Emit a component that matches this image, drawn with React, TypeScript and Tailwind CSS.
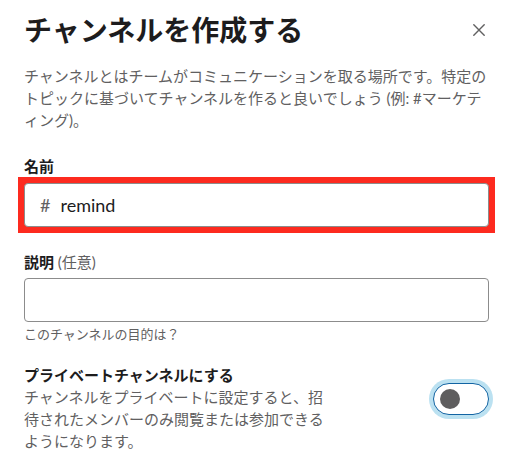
import React from "react";

const font = { fontFamily: 'Lato, "Noto Sans CJK JP", sans-serif' };

function CloseIcon() {
  return (
    <svg width="12" height="12" viewBox="0 0 12 12" fill="none">
      <path d="M0.8 0.8L11.2 11.2M11.2 0.8L0.8 11.2" stroke="#616061" strokeWidth="1.4" strokeLinecap="round" />
    </svg>
  );
}

function Toggle() {
  return (
    <div className="mt-[19px] flex h-[32px] w-[56px] shrink-0 items-center rounded-full border-[1.5px] border-[#1264a3] bg-white pl-[6px] shadow-[0_0_0_4px_rgba(29,155,209,0.3)]">
      <div className="h-[20px] w-[20px] rounded-full bg-[#5e5d5e]" />
    </div>
  );
}

export default function App() {
  return (
    <div lang="ja" style={font} className="h-[458px] w-[508px] overflow-hidden bg-white text-[#1d1c1d] [line-break:normal]">
      <div className="ml-6 w-[465px]">
        <div className="mt-[10px] flex h-[40px] items-center justify-between">
          <h1 className="text-[28px] font-bold leading-[40px]">チャンネルを作成する</h1>
          <button className="flex h-[20px] w-[20px] items-center justify-center">
            <CloseIcon />
          </button>
        </div>

        <p className="mt-[15px] text-[15px] leading-[22px] text-[#616061]">
          チャンネルとはチームがコミュニケーションを取る場所です。特定のトピックに基づいてチャンネルを作ると良いでしょう (例: #マーケティング)。
        </p>

        <label className="mt-6 block text-[15px] font-bold leading-[22px]">名前</label>
        <div className="-mx-[6px] bg-[#fd2a1f] p-[6px]">
          <div className="flex h-[44px] items-center rounded-[4px] border border-[#8c8c8c] bg-white pl-[15px]">
            <span className="text-[18px] text-[#616061]">#</span>
            <span className="ml-[10px] text-[18px] text-[#1d1c1d]">remind</span>
          </div>
        </div>

        <label className="mt-[18px] block text-[15px] leading-[22px]">
          <span className="font-bold">説明</span> <span className="text-[#616061]">(任意)</span>
        </label>
        <div className="mt-[5px] h-[44px] rounded-[4px] border border-[#8c8c8c] bg-white" />
        <p className="mt-[3px] text-[13px] leading-[18px] text-[#616061]">このチャンネルの目的は？</p>

        <div className="mt-[21px] flex items-start justify-between">
          <div className="w-[306px]">
            <div className="text-[15px] font-bold leading-[22px]">プライベートチャンネルにする</div>
            <p className="text-[15px] leading-[22px] text-[#616061]">
              チャンネルをプライベートに設定すると、招待されたメンバーのみ閲覧または参加できるようになります。
            </p>
          </div>
          <Toggle />
        </div>
      </div>
    </div>
  );
}
